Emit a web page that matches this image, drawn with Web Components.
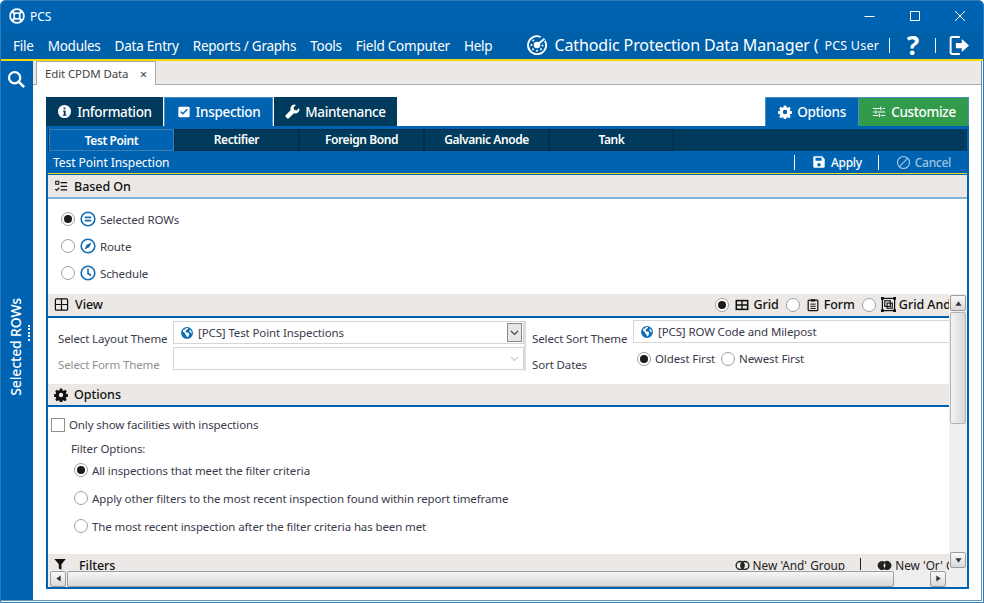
<!DOCTYPE html>
<html>
<head>
<meta charset="utf-8">
<title>PCS</title>
<style>
html, body { margin: 0; padding: 0; background: #fff; overflow: hidden; }
body { font-family: "Noto Sans", "Open Sans", sans-serif; font-size: 12px; --blue: #0063b1; --navy: #003a5c; --gray: #ebe8e6; --yellow: #f2d90f; }
</style>
</head>
<body>
<pcs-window></pcs-window>

<script>
const icons = {
    lifebuoy: '<circle cx="8" cy="8" r="6.9" fill="none" stroke="currentColor" stroke-width="1.8"/><circle cx="8" cy="8" r="3" fill="none" stroke="currentColor" stroke-width="1.5"/><path d="M3 3l3 3M13 3l-3 3M3 13l3-3M13 13l-3-3" stroke="currentColor" stroke-width="2.2"/>',
    radar: '<path d="M14.3 4.6A7.2 7.2 0 1 1 11 1.6" fill="none" stroke="currentColor" stroke-width="1.5"/><circle cx="8" cy="8" r="2.6" fill="currentColor"/><path d="M8 8l6-5" stroke="currentColor" stroke-width="1.4"/><circle cx="3.6" cy="8" r=".8" fill="currentColor"/><circle cx="12.4" cy="8.4" r=".8" fill="currentColor"/><circle cx="8" cy="12.6" r=".8" fill="currentColor"/><circle cx="5" cy="4.4" r=".8" fill="currentColor"/><circle cx="11.2" cy="11.4" r=".8" fill="currentColor"/><circle cx="4.8" cy="11.4" r=".8" fill="currentColor"/>',
    info: '<path fill-rule="evenodd" d="M8 1a7 7 0 1 0 0 14A7 7 0 0 0 8 1zM7 3.6h2v2H7zM6.6 7h2.6v4.4h1v1.2H6.2v-1.2h1V8.2h-.6z" fill="currentColor"/>',
    check: '<path fill-rule="evenodd" d="M3 2h10a1.5 1.5 0 0 1 1.5 1.5v9A1.5 1.5 0 0 1 13 14H3a1.5 1.5 0 0 1-1.5-1.5v-9A1.5 1.5 0 0 1 3 2zm9.3 3.3L11.2 4.2 6.6 8.8 4.8 7 3.7 8.1l2.9 2.9z" fill="currentColor"/>',
    wrench: '<path d="M15 4.3l-2.7 2.6-2.5-.7-.7-2.500L11.7 1a4.3 4.3 0 0 0-5.6 5.5L1 11.600a1.700 1.700 0 0 0 0 2.400l1 1a1.700 1.700 0 0 0 2.400 0l5.100-5.100A4.300 4.300 0 0 0 15 4.300z" fill="currentColor"/>',
    gear: '<path fill-rule="evenodd" d="M6.700 1h2.600l.4 2 1.300.6 1.800-1.100 1.800 1.800-1.100 1.800.6 1.300 2 .4v2.600l-2 .4-.6 1.300 1.100 1.800-1.800 1.800-1.800-1.100-1.300.6-.4 2H6.700l-.4-2-1.300-.6-1.800 1.100-1.800-1.800 1.100-1.800-.6-1.300-2-.4V7.800l2-.4.6-1.300-1.100-1.800 1.800-1.800 1.800 1.100 1.300-.6zM8 6a2.500 2.500 0 1 0 0 5 2.500 2.500 0 0 0 0-5z" fill="currentColor" transform="translate(0 -.5)"/>',
    sliders: '<path d="M1 4h8M12 4h3M1 8h2M6 8h9M1 12h6M10 12h5M10 2v4M4.500 6v4M8.500 10v4" fill="none" stroke="currentColor" stroke-width="1.3"/>',
    save: '<path fill-rule="evenodd" d="M2.500 1.500h9l3 3v8.500a1.500 1.500 0 0 1-1.500 1.500H3A1.500 1.500 0 0 1 1.500 13V2.500a1 1 0 0 1 1-1zM4 3v3.500h7V3zm4 6a2 2 0 1 0 0 4 2 2 0 0 0 0-4z" fill="currentColor"/>',
    ban: '<circle cx="8" cy="8" r="6.4" fill="none" stroke="currentColor" stroke-width="1.3"/><path d="M3.600 12.400l8.800-8.800" stroke="currentColor" stroke-width="1.3"/>',
    tasks: '<path d="M2 2.500h3.500V6H2z" fill="none" stroke="currentColor" stroke-width="1.2"/><path d="M7.500 4.200H15M7.500 8.500H15M7.500 12.500H15" stroke="currentColor" stroke-width="1.3"/><path d="M1.500 11.500l1.500 1.500 3-3" fill="none" stroke="currentColor" stroke-width="1.3"/>',
    equals: '<circle cx="8" cy="8" r="6.8" fill="none" stroke="currentColor" stroke-width="1.6"/><path d="M4.800 6.300h6.400M4.800 9.700h6.400" stroke="currentColor" stroke-width="1.7"/>',
    compass: '<circle cx="8" cy="8" r="6.8" fill="none" stroke="currentColor" stroke-width="1.6"/><path d="M11.500 4.500L9.300 9.300 4.500 11.500 6.700 6.700z" fill="currentColor"/>',
    clock: '<circle cx="8" cy="8" r="6.8" fill="none" stroke="currentColor" stroke-width="1.6"/><path d="M8 3.800V8.500l3 2" fill="none" stroke="currentColor" stroke-width="1.6"/>',
    grid: '<rect x="1.500" y="2" width="13" height="12" rx="1" fill="none" stroke="currentColor" stroke-width="1.3"/><path d="M8 2v12M1.500 8h13" stroke="currentColor" stroke-width="1.3"/>',
    gridfill: '<rect x="1.500" y="3" width="13" height="10" fill="none" stroke="currentColor" stroke-width="1.8"/><path d="M8 3v10M1.500 8h13" stroke="currentColor" stroke-width="1.5"/>',
    clipboard: '<rect x="2.500" y="2.500" width="11" height="12" rx="1" fill="none" stroke="currentColor" stroke-width="1.4"/><path d="M5.500 1.500h5v2.500h-5z" fill="currentColor"/><path d="M5 7h6M5 9.500h6M5 12h6" stroke="currentColor" stroke-width="1.1"/>',
    gridand: '<rect x="1.500" y="1.500" width="13" height="13" fill="none" stroke="currentColor" stroke-width="1.3"/><path d="M0 0h3v3H0zM13 0h3v3h-3zM0 13h3v3H0zM13 13h3v3h-3z" fill="currentColor"/><rect x="4" y="4" width="6" height="6" fill="none" stroke="currentColor" stroke-width="1.2"/><rect x="6.500" y="6.500" width="5.500" height="5.500" fill="none" stroke="currentColor" stroke-width="1.2"/>',
    globe: '<path fill-rule="evenodd" d="M8 1.200a6.800 6.800 0 1 0 0 13.600A6.800 6.800 0 0 0 8 1.200zM3.500 4.500l2.500-.8 1-1.300h2.300L8.500 4 7 4.500 6.300 6 7.500 7.500l2.200.3 1 1.600-1 2.300-1.500 1.300-.7-2-1.300-1-.3-1.700-2.400-1.800zM11.500 4l1.800 2.500.2 2-1.500-.8-1.500-2z" fill="currentColor"/>',
    filter: '<path d="M.500 1h13L8.500 7v6.500l-3-1.500V7z" fill="currentColor"/>',
    venn: '<circle cx="5.500" cy="8" r="4.300" fill="none" stroke="currentColor" stroke-width="1.5"/><circle cx="10.500" cy="8" r="4.300" fill="none" stroke="currentColor" stroke-width="1.5"/><path d="M8 4.600a4.300 4.300 0 0 1 0 6.800 4.300 4.300 0 0 1 0-6.800z" fill="currentColor"/>',
    vennor: '<path fill-rule="evenodd" d="M5.500 3.200A4.800 4.800 0 0 1 8 3.900a4.800 4.800 0 1 1 0 8.200 4.800 4.800 0 1 1-2.500-8.900zM8 5.400a4.300 4.300 0 0 0 0 5.200 4.300 4.300 0 0 0 0-5.200z" fill="currentColor"/>',
    search: '<circle cx="6.800" cy="6.800" r="5" fill="none" stroke="currentColor" stroke-width="2"/><path d="M10.500 10.500l4.700 4.700" stroke="currentColor" stroke-width="2.300"/>',
    logout: '<path d="M9 2H3.200A1.200 1.200 0 0 0 2 3.200v10.600A1.200 1.200 0 0 0 3.200 15H9" fill="none" stroke="currentColor" stroke-width="1.5" transform="translate(0 -.5)"/><path d="M6 6.500h4.500V3.500L16 8.500l-5.500 5v-3H6z" fill="currentColor" transform="translate(0 -.5)"/>',
};

class PcsIcon extends HTMLElement {
    connectedCallback() {
        const size = this.getAttribute('size') || 16;
        const root = this.attachShadow({ mode: 'open' });
        root.innerHTML = `
<style>
:host { display: inline-flex; flex: none; width: ${size}px; height: ${size}px; }
svg { display: block; width: 100%; height: 100%; }
</style>
<svg viewBox="0 0 16 16">${icons[this.getAttribute('name')] || ''}</svg>`;
    }
}
customElements.define('pcs-icon', PcsIcon);

const titleBarTemplate = document.createElement('template');
titleBarTemplate.innerHTML = `
<style>
:host { display: flex; align-items: center; height: 30px; background: var(--blue); color: #fff; padding: 0 0 0 8px; }
.name { margin-left: 5px; font-size: 12px; }
.controls { margin-left: auto; display: flex; align-items: center; padding-right: 14px; gap: 28.5px; }
.controls svg { display: block; width: 17px; height: 17px; }
</style>
<pcs-icon name="lifebuoy"></pcs-icon>
<span class="name">PCS</span>
<div class="controls">
    <svg viewBox="0 0 17 17"><path d="M3.500 8.500h10" stroke="#fff" stroke-width="1"/></svg>
    <svg viewBox="0 0 17 17"><rect x="3.500" y="3.500" width="9" height="9" fill="none" stroke="#fff"/></svg>
    <svg viewBox="0 0 17 17"><path d="M3 3l10 10M13 3L3 13" stroke="#fff" stroke-width="1"/></svg>
</div>`;
class TitleBar extends HTMLElement {
    constructor() {
        super();
        this.attachShadow({ mode: 'open' });
        this.shadowRoot.appendChild(titleBarTemplate.content.cloneNode(true));
    }
}
customElements.define('title-bar', TitleBar);

const menuBarTemplate = document.createElement('template');
menuBarTemplate.innerHTML = `
<style>
:host { display: flex; align-items: center; height: 28px; background: #005fa9; color: #fff; border-bottom: 2px solid var(--yellow); padding-left: 12px; font-size: 13.5px; }
.menu { display: flex; gap: 14px; letter-spacing: -.24px; padding-top: 2px; }
.right { margin-left: auto; display: flex; align-items: center; padding-right: 14px; }
.app { font-size: 16px; margin-left: 8px; letter-spacing: -.13px; }
.user { font-size: 12.5px; margin-left: 6px; letter-spacing: .2px; }
.sep { width: 1px; height: 15px; background: #fff; }
.help { font-size: 26px; font-weight: 700; line-height: 28px; width: 44px; padding-left: 1px; text-align: center; }
</style>
<div class="menu">
    <span>File</span><span>Modules</span><span>Data Entry</span><span>Reports / Graphs</span><span>Tools</span><span>Field Computer</span><span>Help</span>
</div>
<div class="right">
    <pcs-icon name="radar" size="20"></pcs-icon>
    <span class="app">Cathodic Protection Data Manager (</span>
    <span class="user">PCS User</span>
    <span class="sep" style="margin-left:10px"></span>
    <span class="help">?</span>
    <span class="sep"></span>
    <pcs-icon name="logout" size="21" style="margin-left:12px"></pcs-icon>
</div>`;
class MenuBar extends HTMLElement {
    constructor() {
        super();
        this.attachShadow({ mode: 'open' });
        this.shadowRoot.appendChild(menuBarTemplate.content.cloneNode(true));
    }
}
customElements.define('menu-bar', MenuBar);

const sideRailTemplate = document.createElement('template');
sideRailTemplate.innerHTML = `
<style>
:host { display: flex; flex-direction: column; align-items: center; width: 32px; flex: none; background: var(--blue); color: #fff; }
pcs-icon { margin: 9px 2px 0 0; }
.label { display: flex; align-items: flex-start; margin-top: 210px; width: 100%; }
.text { writing-mode: vertical-rl; transform: rotate(180deg); font-size: 14px; font-weight: 500; letter-spacing: -.15px; margin-left: 5px; line-height: 20px; }
.dots { width: 2px; height: 17px; margin: 27px 0 0 2px; background: repeating-linear-gradient(#fff 0 2px, transparent 2px 3.5px); }
</style>
<pcs-icon name="search" size="18"></pcs-icon>
<div class="label"><span class="text">Selected ROWs</span><span class="dots"></span></div>`;
class SideRail extends HTMLElement {
    constructor() {
        super();
        this.attachShadow({ mode: 'open' });
        this.shadowRoot.appendChild(sideRailTemplate.content.cloneNode(true));
    }
}
customElements.define('side-rail', SideRail);

const docTabsTemplate = document.createElement('template');
docTabsTemplate.innerHTML = `
<style>
:host { display: flex; height: 23px; background: var(--gray); border-bottom: 1px solid #aaa; padding-left: 3px; }
.tab { display: flex; align-items: center; width: 120px; box-sizing: border-box; height: 24px; background: #fff; border: 1px solid #aaa; border-bottom: 0; padding-left: 8px; font-size: 11.5px; color: #444; letter-spacing: -.12px; }
.x { margin-left: auto; margin-right: 8px; font-size: 13px; color: #444; }
</style>
<div class="tab">Edit CPDM Data<span class="x">×</span></div>`;
class DocTabs extends HTMLElement {
    constructor() {
        super();
        this.attachShadow({ mode: 'open' });
        this.shadowRoot.appendChild(docTabsTemplate.content.cloneNode(true));
    }
}
customElements.define('doc-tabs', DocTabs);

const topTabTemplate = document.createElement('template');
topTabTemplate.innerHTML = `
<style>
:host { display: flex; align-items: center; justify-content: center; gap: 5px; box-sizing: border-box; height: 29px; color: #fff; font-size: 13.5px; font-weight: 500; background: var(--navy); letter-spacing: -.33px; margin-right: 1px; }
:host([kind="active"]) { background: var(--blue); box-shadow: inset 0 1px #4a8fc4, inset 1px 0 #4a8fc4, inset -1px 0 #4a8fc4; }
:host([kind="green"]) { background: #319b4b; box-shadow: inset 0 1px #4a8fc4, inset -1px 0 #4a8fc4; margin-right: 0; }
</style>
<slot name="icon"></slot><slot></slot>`;
class TopTab extends HTMLElement {
    constructor() {
        super();
        this.attachShadow({ mode: 'open' });
        this.shadowRoot.appendChild(topTabTemplate.content.cloneNode(true));
    }
}
customElements.define('top-tab', TopTab);

const subTabTemplate = document.createElement('template');
subTabTemplate.innerHTML = `
<style>
:host { display: flex; align-items: center; justify-content: center; box-sizing: border-box; width: 125px; height: 22px; color: #fff; font-size: 12px; font-weight: 600; letter-spacing: -.42px; border: 1px solid #022c47; background: var(--navy); padding-bottom: 1px; }
:host([active]) { background: var(--blue); border-color: #3c7fb5; padding-bottom: 0; }
</style>
<slot></slot>`;
class SubTab extends HTMLElement {
    constructor() {
        super();
        this.attachShadow({ mode: 'open' });
        this.shadowRoot.appendChild(subTabTemplate.content.cloneNode(true));
    }
}
customElements.define('sub-tab', SubTab);

const sectionHeadTemplate = document.createElement('template');
sectionHeadTemplate.innerHTML = `
<style>
:host { display: flex; align-items: center; flex: none; box-sizing: border-box; height: 24px; background: var(--gray); border-bottom: 2px solid var(--line, var(--blue)); padding-left: 6px; color: #111; font-size: 12.5px; font-weight: 500; letter-spacing: -.05px; overflow: hidden; white-space: nowrap; }
.title { margin-left: 6px; }
.extra { margin-left: auto; display: flex; align-items: center; }
</style>
<slot name="icon"></slot><span class="title"><slot></slot></span><div class="extra"><slot name="extra"></slot></div>`;
class SectionHead extends HTMLElement {
    constructor() {
        super();
        this.attachShadow({ mode: 'open' });
        this.shadowRoot.appendChild(sectionHeadTemplate.content.cloneNode(true));
    }
}
customElements.define('section-head', SectionHead);

const radioOptTemplate = document.createElement('template');
radioOptTemplate.innerHTML = `
<style>
:host { display: inline-flex; align-items: center; gap: 4px; white-space: nowrap; }
.dot { flex: none; box-sizing: border-box; width: 14px; height: 14px; border-radius: 50%; border: 1px solid #a0a0a0; background: #fff; display: flex; align-items: center; justify-content: center; }
:host([checked]) .dot::after { content: ""; width: 8px; height: 8px; border-radius: 50%; background: #1c1c1c; }
</style>
<span class="dot"></span><slot></slot>`;
class RadioOpt extends HTMLElement {
    constructor() {
        super();
        this.attachShadow({ mode: 'open' });
        this.shadowRoot.appendChild(radioOptTemplate.content.cloneNode(true));
    }
}
customElements.define('radio-opt', RadioOpt);

const themeComboTemplate = document.createElement('template');
themeComboTemplate.innerHTML = `
<style>
:host { display: flex; align-items: center; box-sizing: border-box; height: 23px; border: 1px solid #d5d5d5; background: #fff; padding-left: 6px; gap: 4px; color: #3a3a4a; white-space: nowrap; overflow: hidden; }
::slotted(pcs-icon) { color: #0f6cb5; }
.drop { margin-left: auto; flex: none; box-sizing: border-box; width: 15px; height: 19px; margin-right: 1px; display: flex; align-items: center; justify-content: center; }
:host([open]) .drop { border: 1px solid #8a8a8a; background: #e6e6e6; }
.drop svg { width: 9px; height: 6px; }
</style>
<slot></slot><span class="drop"><svg viewBox="0 0 9 6"><path d="M1 1l3.500 3.500L8 1" fill="none" stroke="var(--arrow, #444)" stroke-width="1.2"/></svg></span>`;
class ThemeCombo extends HTMLElement {
    constructor() {
        super();
        this.attachShadow({ mode: 'open' });
        this.shadowRoot.appendChild(themeComboTemplate.content.cloneNode(true));
    }
}
customElements.define('theme-combo', ThemeCombo);

const barBtnTemplate = document.createElement('template');
barBtnTemplate.innerHTML = `
<style>
:host { display: flex; align-items: center; justify-content: center; flex: none; box-sizing: border-box; width: 16px; height: 16px; border: 1px solid #9c9c9c; border-radius: 2px; background: linear-gradient(#fafafa, #d8d8d8); }
svg { width: 7px; height: 7px; }
</style>
<svg viewBox="0 0 8 8"><path d="M4 1.500L7.500 6.500H.5z" fill="#333"/></svg>`;
class BarBtn extends HTMLElement {
    constructor() {
        super();
        this.attachShadow({ mode: 'open' });
        this.shadowRoot.appendChild(barBtnTemplate.content.cloneNode(true));
        this.shadowRoot.querySelector('svg').style.transform = `rotate(${this.getAttribute('turn') || 0}deg)`;
    }
}
customElements.define('bar-btn', BarBtn);

const inspectionPanelTemplate = document.createElement('template');
inspectionPanelTemplate.innerHTML = `
<style>
:host { display: flex; flex-direction: column; height: 492px; color: #3a3a4a; font-size: 11.5px; letter-spacing: -.12px; }
.toptabs { display: flex; height: 29px; flex: none; }
.toptabs .gap { flex: 1; }
.box { flex: 1; min-height: 0; display: flex; flex-direction: column; border: 2px solid var(--blue); border-top-width: 3px; }
.subtabs { display: flex; flex: none; height: 22px; background: var(--navy); padding-left: 1px; }
.bar { display: flex; align-items: center; flex: none; height: 22px; background: var(--blue); color: #fff; padding: 0 16px 0 5px; font-size: 12px; letter-spacing: -.05px; border-bottom: 1px solid var(--yellow); }
.bar .act { display: flex; align-items: center; gap: 5px; font-weight: 500; letter-spacing: -.3px; }
.bar .sep { width: 1px; height: 15px; background: #fff; }
.bar .off { color: #9fc3df; gap: 4px; }
.line { height: 1px; background: var(--blue); flex: none; }
.based { --line: #7fb5da; }
.based-body { flex: none; height: 95px; display: flex; flex-direction: column; gap: 9px; padding: 11px 0 0 13px; box-sizing: border-box; }
.based-body radio-opt { height: 18px; }
.circ { color: #0f6cb5; margin-left: 1px; }
.main { flex: 1; min-height: 0; display: flex; }
.scroll { flex: 1; min-width: 0; display: flex; flex-direction: column; overflow: hidden; }
.vbar { width: 18px; flex: none; display: flex; flex-direction: column; background: #efefef; padding: 1px 1px 2px; box-sizing: border-box; height: 276px; }
.vthumb { box-sizing: border-box; width: 16px; height: 112px; margin-top: 1px; border: 1px solid #b5b5b5; border-radius: 2px; background: linear-gradient(90deg, #f4f4f4, #d6d6d6); }
.vbar .fill { flex: 1; }
.view-head { padding-bottom: 1px; }
.view-form { display: flex; flex: none; height: 66px; box-sizing: border-box; padding-top: 3px; }
.view-left { width: 466px; flex: none; display: grid; grid-template-columns: 115px 351px; grid-template-rows: 23px 23px; row-gap: 3px; padding-left: 10px; border-right: 2px solid #ddd; height: 50px; }
.view-right { flex: 1; min-width: 0; display: grid; grid-template-columns: 101px 1fr; grid-template-rows: 23px 23px; row-gap: 3px; padding-left: 6px; height: 50px; }
.view-right theme-combo { margin: -1px -24px 0 0; }
.lab { align-self: end; white-space: nowrap; margin-bottom: -2px; }
.dim { color: #909090; }
.sort { display: flex; gap: 6px; padding-left: 4px; align-items: center; height: 23px; }
.opts-head { height: 23px; }
.opts-body { flex: none; height: 147px; box-sizing: border-box; padding: 11px 0 0 3px; }
.chk { display: flex; align-items: center; gap: 4px; height: 14px; }
.chk b { font-weight: 400; margin-top: -2px; }
.box14 { width: 14px; height: 14px; box-sizing: border-box; border: 1px solid #8f8f8f; background: #fff; }
.fo { margin: 9px 0 0 20px; height: 16px; line-height: 16px; }
.fopts { display: flex; flex-direction: column; gap: 10px; margin: 4px 0 0 23px; }
.fopts radio-opt { height: 18px; }
.hwrap { flex: none; display: flex; height: 17px; }
.hbar { flex: 1; display: flex; background: #efefef; align-items: center; padding: 0 3px 0 2px; }
.hthumb { flex: none; box-sizing: border-box; width: 827px; height: 16px; margin-left: 1px; border: 1px solid #9c9c9c; border-radius: 2px; background: linear-gradient(#f6f6f6, #d8d8d8); }
.hbar .fill { flex: 1; }
.corner { width: 18px; background: #efefef; }
.mode { display: flex; align-items: center; color: #111; }
.mode pcs-icon { margin: 0 4px 0 6px; }
.mode pcs-icon.last { margin: 0 3px 0 5px; }
.mode span { margin-right: 7px; }
.mode span:last-child { margin-right: -2px; }
.links { display: flex; align-items: center; font-weight: 400; color: #222; font-size: 11.8px; letter-spacing: .02px; margin-right: -32px; }
.links .s { width: 1px; height: 15px; background: #222; margin: 0 16px 0 15px; }
.links span { display: inline-flex; gap: 3px; align-items: center; }
</style>
<div class="toptabs">
    <top-tab style="width:117px"><pcs-icon slot="icon" name="info" size="15"></pcs-icon>Information</top-tab>
    <top-tab kind="active" style="width:109px"><pcs-icon slot="icon" name="check" size="14"></pcs-icon>Inspection</top-tab>
    <top-tab style="width:123px"><pcs-icon slot="icon" name="wrench" size="15"></pcs-icon>Maintenance</top-tab>
    <span class="gap"></span>
    <top-tab kind="active" style="width:94px;margin-right:0"><pcs-icon slot="icon" name="gear" size="14"></pcs-icon>Options</top-tab>
    <top-tab kind="green" style="width:110px"><pcs-icon slot="icon" name="sliders" size="14"></pcs-icon>Customize</top-tab>
</div>
<div class="box">
    <div class="subtabs">
        <sub-tab active>Test Point</sub-tab><sub-tab>Rectifier</sub-tab><sub-tab>Foreign Bond</sub-tab><sub-tab>Galvanic Anode</sub-tab><sub-tab>Tank</sub-tab>
    </div>
    <div class="bar">
        <span>Test Point Inspection</span>
        <span class="sep" style="margin-left:auto"></span>
        <span class="act" style="margin:0 16px 0 17px"><pcs-icon name="save" size="14"></pcs-icon>Apply</span>
        <span class="sep"></span>
        <span class="act off" style="margin-left:17px"><pcs-icon name="ban" size="15"></pcs-icon>Cancel</span>
    </div>
    <div class="line"></div>
    <section-head class="based"><pcs-icon slot="icon" name="tasks" size="14"></pcs-icon>Based On</section-head>
    <div class="based-body">
        <radio-opt checked><pcs-icon class="circ" name="equals" size="16"></pcs-icon> Selected ROWs</radio-opt>
        <radio-opt><pcs-icon class="circ" name="compass" size="16"></pcs-icon> Route</radio-opt>
        <radio-opt><pcs-icon class="circ" name="clock" size="16"></pcs-icon> Schedule</radio-opt>
    </div>
    <div class="main">
        <div class="scroll">
            <section-head class="view-head"><pcs-icon slot="icon" name="grid" size="15"></pcs-icon>View
                <div slot="extra" class="mode">
                    <radio-opt checked></radio-opt><pcs-icon name="gridfill" size="14"></pcs-icon><span>Grid</span>
                    <radio-opt></radio-opt><pcs-icon name="clipboard" size="14"></pcs-icon><span>Form</span>
                    <radio-opt></radio-opt><pcs-icon class="last" name="gridand" size="15"></pcs-icon><span>Grid And</span>
                </div>
            </section-head>
            <div class="view-form">
                <div class="view-left">
                    <span class="lab">Select Layout Theme</span>
                    <theme-combo open><pcs-icon name="globe" size="14"></pcs-icon>[PCS] Test Point Inspections</theme-combo>
                    <span class="lab dim">Select Form Theme</span>
                    <theme-combo style="--arrow:#ccc"></theme-combo>
                </div>
                <div class="view-right">
                    <span class="lab">Select Sort Theme</span>
                    <theme-combo><pcs-icon name="globe" size="14"></pcs-icon>[PCS] ROW Code and Milepost</theme-combo>
                    <span class="lab">Sort Dates</span>
                    <div class="sort"><radio-opt checked>Oldest First</radio-opt><radio-opt>Newest First</radio-opt></div>
                </div>
            </div>
            <section-head class="opts-head"><pcs-icon slot="icon" name="gear" size="14"></pcs-icon>Options</section-head>
            <div class="opts-body">
                <div class="chk"><span class="box14"></span><b>Only show facilities with inspections</b></div>
                <div class="fo">Filter Options:</div>
                <div class="fopts">
                    <radio-opt checked>All inspections that meet the filter criteria</radio-opt>
                    <radio-opt>Apply other filters to the most recent inspection found within report timeframe</radio-opt>
                    <radio-opt>The most recent inspection after the filter criteria has been met</radio-opt>
                </div>
            </div>
            <section-head><pcs-icon slot="icon" name="filter" size="14"></pcs-icon><span style="margin-left:5px">Filters</span>
                <div slot="extra" class="links">
                    <span><pcs-icon name="venn" size="15"></pcs-icon>New 'And' Group</span><i class="s"></i><span><pcs-icon name="vennor" size="15"></pcs-icon>New 'Or' Group</span>
                </div>
            </section-head>
        </div>
        <div class="vbar">
            <bar-btn></bar-btn>
            <div class="vthumb"></div>
            <div class="fill"></div>
            <bar-btn turn="180"></bar-btn>
        </div>
    </div>
    <div class="hwrap">
        <div class="hbar">
            <bar-btn turn="-90"></bar-btn>
            <div class="hthumb"></div>
            <div class="fill"></div>
            <bar-btn turn="90"></bar-btn>
        </div>
        <div class="corner"></div>
    </div>
</div>`;
class InspectionPanel extends HTMLElement {
    constructor() {
        super();
        this.attachShadow({ mode: 'open' });
        this.shadowRoot.appendChild(inspectionPanelTemplate.content.cloneNode(true));
    }
}
customElements.define('inspection-panel', InspectionPanel);

const windowTemplate = document.createElement('template');
windowTemplate.innerHTML = `
<style>
:host { display: flex; flex-direction: column; box-sizing: border-box; width: 984px; height: 603px; border: 1px solid #2b7cbc; border-radius: 5px 5px 0 0; overflow: hidden; background: #fff; }
.body { flex: 1; min-height: 0; display: flex; border-bottom: 1px solid #5c93bf; border-right: 1px solid #5c93bf; margin-bottom: 1px; margin-right: 1px; }
.work { flex: 1; min-width: 0; display: flex; flex-direction: column; }
.content { padding: 12px 12px 0 13px; }
</style>
<title-bar></title-bar>
<menu-bar></menu-bar>
<div class="body">
    <side-rail></side-rail>
    <div class="work">
        <doc-tabs></doc-tabs>
        <div class="content"><inspection-panel></inspection-panel></div>
    </div>
</div>`;
class PcsWindow extends HTMLElement {
    constructor() {
        super();
        this.attachShadow({ mode: 'open' });
        this.shadowRoot.appendChild(windowTemplate.content.cloneNode(true));
    }
}
customElements.define('pcs-window', PcsWindow);
</script>
</body>
</html>
